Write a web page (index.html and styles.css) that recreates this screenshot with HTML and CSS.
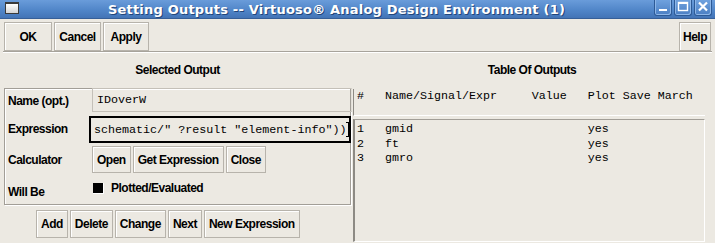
FILE: index.html
```html
<!DOCTYPE html>
<html>
<head>
<meta charset="utf-8">
<link rel="stylesheet" href="styles.css">
</head>
<body>
<div class="window">
  <div class="titlebar">
    <div class="winicon"></div>
    <div class="title">Setting Outputs -- Virtuoso® Analog Design Environment (1)</div>
    <div class="wbtns">
      <div class="wbtn"><svg width="18" height="16" viewBox="0 0 18 16"><rect x="5" y="10" width="8" height="2" fill="#fff"/></svg></div>
      <div class="wbtn"><svg width="18" height="16" viewBox="0 0 18 16"><rect x="4.5" y="3.5" width="9" height="8" fill="none" stroke="#fff" stroke-width="1.4"/><rect x="4" y="3" width="10" height="2" fill="#fff"/></svg></div>
      <div class="wbtn"><svg width="18" height="16" viewBox="0 0 18 16"><path d="M5 3.5 L13 11.5 M13 3.5 L5 11.5" stroke="#fff" stroke-width="2.2"/></svg></div>
    </div>
  </div>
  <div class="toolbar">
    <button class="btn tb w48">OK</button>
    <button class="btn tb w47">Cancel</button>
    <button class="btn tb w46">Apply</button>
    <div class="spacer"></div>
    <button class="btn tb w32">Help</button>
  </div>
  <div class="sep"></div>
  <div class="main">
    <div class="left">
      <div class="heading">Selected Output</div>
      <div class="group">
        <div class="label">Name (opt.)</div>
        <div class="cell"><div class="entry name">IDoverW</div></div>
        <div class="label">Expression</div>
        <div class="cell"><div class="entry expr">schematic/" ?result "element-info"))<span class="ibeam"></span></div></div>
        <div class="label">Calculator</div>
        <div class="cell btnrow">
          <button class="btn sm">Open</button>
          <button class="btn sm">Get Expression</button>
          <button class="btn sm">Close</button>
        </div>
        <div class="label lower">Will Be</div>
        <div class="cell check"><span class="box"></span><span>Plotted/Evaluated</span></div>
      </div>
      <div class="actions">
        <button class="btn act">Add</button>
        <button class="btn act">Delete</button>
        <button class="btn act">Change</button>
        <button class="btn act">Next</button>
        <button class="btn act">New Expression</button>
      </div>
    </div>
    <div class="right">
      <div class="heading">Table Of Outputs</div>
      <div class="thead"><pre class="mono">#   Name/Signal/Expr     Value   Plot Save March</pre></div>
      <div class="tbody"><pre class="mono">1   gmid                         yes
2   ft                           yes
3   gmro                         yes</pre></div>
    </div>
  </div>
</div>
</body>
</html>
```
FILE: styles.css
```css
html, body {
  margin: 0;
  padding: 0;
  background: #ece9e2;
}
.window {
  width: 715px;
  height: 243px;
  overflow: hidden;
  font-family: "Liberation Sans", Arial, sans-serif;
  font-size: 12px;
  letter-spacing: -0.5px;
  font-weight: bold;
  color: #000;
}
.titlebar {
  height: 19px;
  display: flex;
  align-items: center;
  background: linear-gradient(#6a9cda, #4f84c7 60%, #4374b6);
  border-bottom: 1px solid #365f98;
  box-sizing: border-box;
}
.winicon {
  width: 12px;
  height: 9px;
  margin: 0 0 2px 5px;
  background: linear-gradient(#ffffff, #d4d4d4);
  border: 1px solid #3a3a3a;
  border-top-width: 2px;
  box-sizing: content-box;
}
.title {
  flex: 1;
  text-align: center;
  color: #fff;
  font-family: "DejaVu Sans", sans-serif;
  font-size: 13px;
  font-weight: bold;
  letter-spacing: 0.2px;
  text-shadow: 1px 1px 0 #23467a;
  padding-right: 0;
}
.wbtns {
  display: flex;
  gap: 2px;
  margin-right: 3px;
  align-self: flex-start;
}
.wbtn {
  width: 18px;
  height: 16px;
  border: 1px solid #2d5a96;
  border-top: none;
  border-radius: 0 0 3px 3px;
  background: linear-gradient(#6fa1de, #4b7fc3);
  box-shadow: inset 1px 0 #8db6e8, inset -1px -1px #8db6e8;
  box-sizing: border-box;
  overflow: hidden;
}
.wbtn svg { display: block; margin: -1px 0 0 -1px; }
.toolbar {
  display: flex;
  padding: 3px 4px 0 4px;
  gap: 2px;
  height: 32px;
  box-sizing: border-box;
}
.spacer { flex: 1; }
.btn {
  font: inherit;
  font-weight: bold;
  letter-spacing: -0.5px;
  color: #000;
  background: #ece9e2;
  border: 1px solid #b7b3ab;
  box-shadow: inset 1px 1px #ffffff;
  padding: 0 4px;
  margin: 0;
  cursor: default;
}
.tb { height: 29px; }
.w48 { width: 48px; }
.w47 { width: 47px; }
.w46 { width: 46px; }
.w32 { width: 32px; padding: 0; }
.sep {
  margin: 0 3px 0 3px;
  border-top: 1px solid #a7a39b;
  border-bottom: 1px solid #ffffff;
  width: 709px;
}
.main {
  display: flex;
}
.left {
  width: 347px;
  margin-left: 4px;
}
.right {
  width: 354px;
  margin-left: 4px;
}
.heading {
  height: 35px;
  box-sizing: border-box;
  padding-top: 10px;
  line-height: 14px;
  text-align: center;
}
.group {
  display: grid;
  grid-template-columns: 86px 1fr;
  grid-template-rows: 24px 32px 30px 28px;
  border: 1px solid #a29e97;
  box-shadow: inset 1px 1px #ffffff, 1px 1px #ffffff;
  height: 117px;
  box-sizing: border-box;
}
.label {
  padding-left: 3px;
  display: flex;
  align-items: center;
}
.label.lower { padding-top: 6px; }
.cell { min-width: 0; }
.entry {
  font-family: "Liberation Mono", "Courier New", monospace;
  font-weight: normal;
  letter-spacing: 0;
  font-size: 11.7px;
  white-space: pre;
  box-sizing: border-box;
  display: flex;
  align-items: center;
  overflow: hidden;
}
.entry.name {
  height: 24px;
  margin: -1px 0 0 1px;
  width: 260px;
  border: 1px solid #c4c0b8;
  border-right-color: #e2dfd8;
  padding-left: 4px;
  align-items: flex-start;
  padding-top: 4px;
}
.entry.expr {
  height: 27px;
  margin: 3px -1px 0 -2px;
  border: 2px solid #000;
  padding-left: 3px;
}
.ibeam {
  display: inline-block;
  width: 5px;
  height: 15px;
  margin-left: 1px;
  border-left: 1px solid #000;
  position: relative;
}
.ibeam::before, .ibeam::after {
  content: "";
  position: absolute;
  left: -3px;
  width: 5px;
  height: 1px;
  background: #000;
}
.ibeam::before { top: 0; }
.ibeam::after { bottom: 0; }
.btnrow {
  display: flex;
  gap: 2px;
  padding-top: 1px;
  padding-left: 1px;
}
.sm { height: 27px; padding: 0 4px; }
.check {
  display: flex;
  align-items: center;
  gap: 7px;
  padding-left: 2px;
  padding-bottom: 2px;
}
.box {
  width: 10px;
  height: 10px;
  background: #000;
  border-right: 1px solid #fff;
  border-bottom: 1px solid #fff;
}
.actions {
  display: flex;
  gap: 2px;
  padding-left: 32px;
  margin-top: 5px;
}
.act { height: 28px; padding: 0 4px; }
.mono {
  font-family: "Liberation Mono", "Courier New", monospace;
  font-weight: normal;
  letter-spacing: 0;
  font-size: 11.67px;
  margin: 0;
  line-height: 14.5px;
}
.thead {
  height: 27px;
  box-sizing: border-box;
  border-left: 1px solid #8d8a84;
  border-bottom: 1px solid #ffffff;
  padding: 0 0 0 3px;
  margin-left: -2px;
  width: 352px;
}
.thead .mono { margin-top: 1px; }
.tbody {
  margin-top: 3px;
  margin-left: -2px;
  width: 352px;
  height: 123px;
  box-sizing: border-box;
  border-left: 2px solid #8d8a84;
  border-top: 1px solid #a29e97;
  border-right: 1px solid #ffffff;
  border-bottom: 1px solid #ffffff;
  padding: 2px 0 0 2px;
}
.tbody .mono { line-height: 14.7px; }
```
